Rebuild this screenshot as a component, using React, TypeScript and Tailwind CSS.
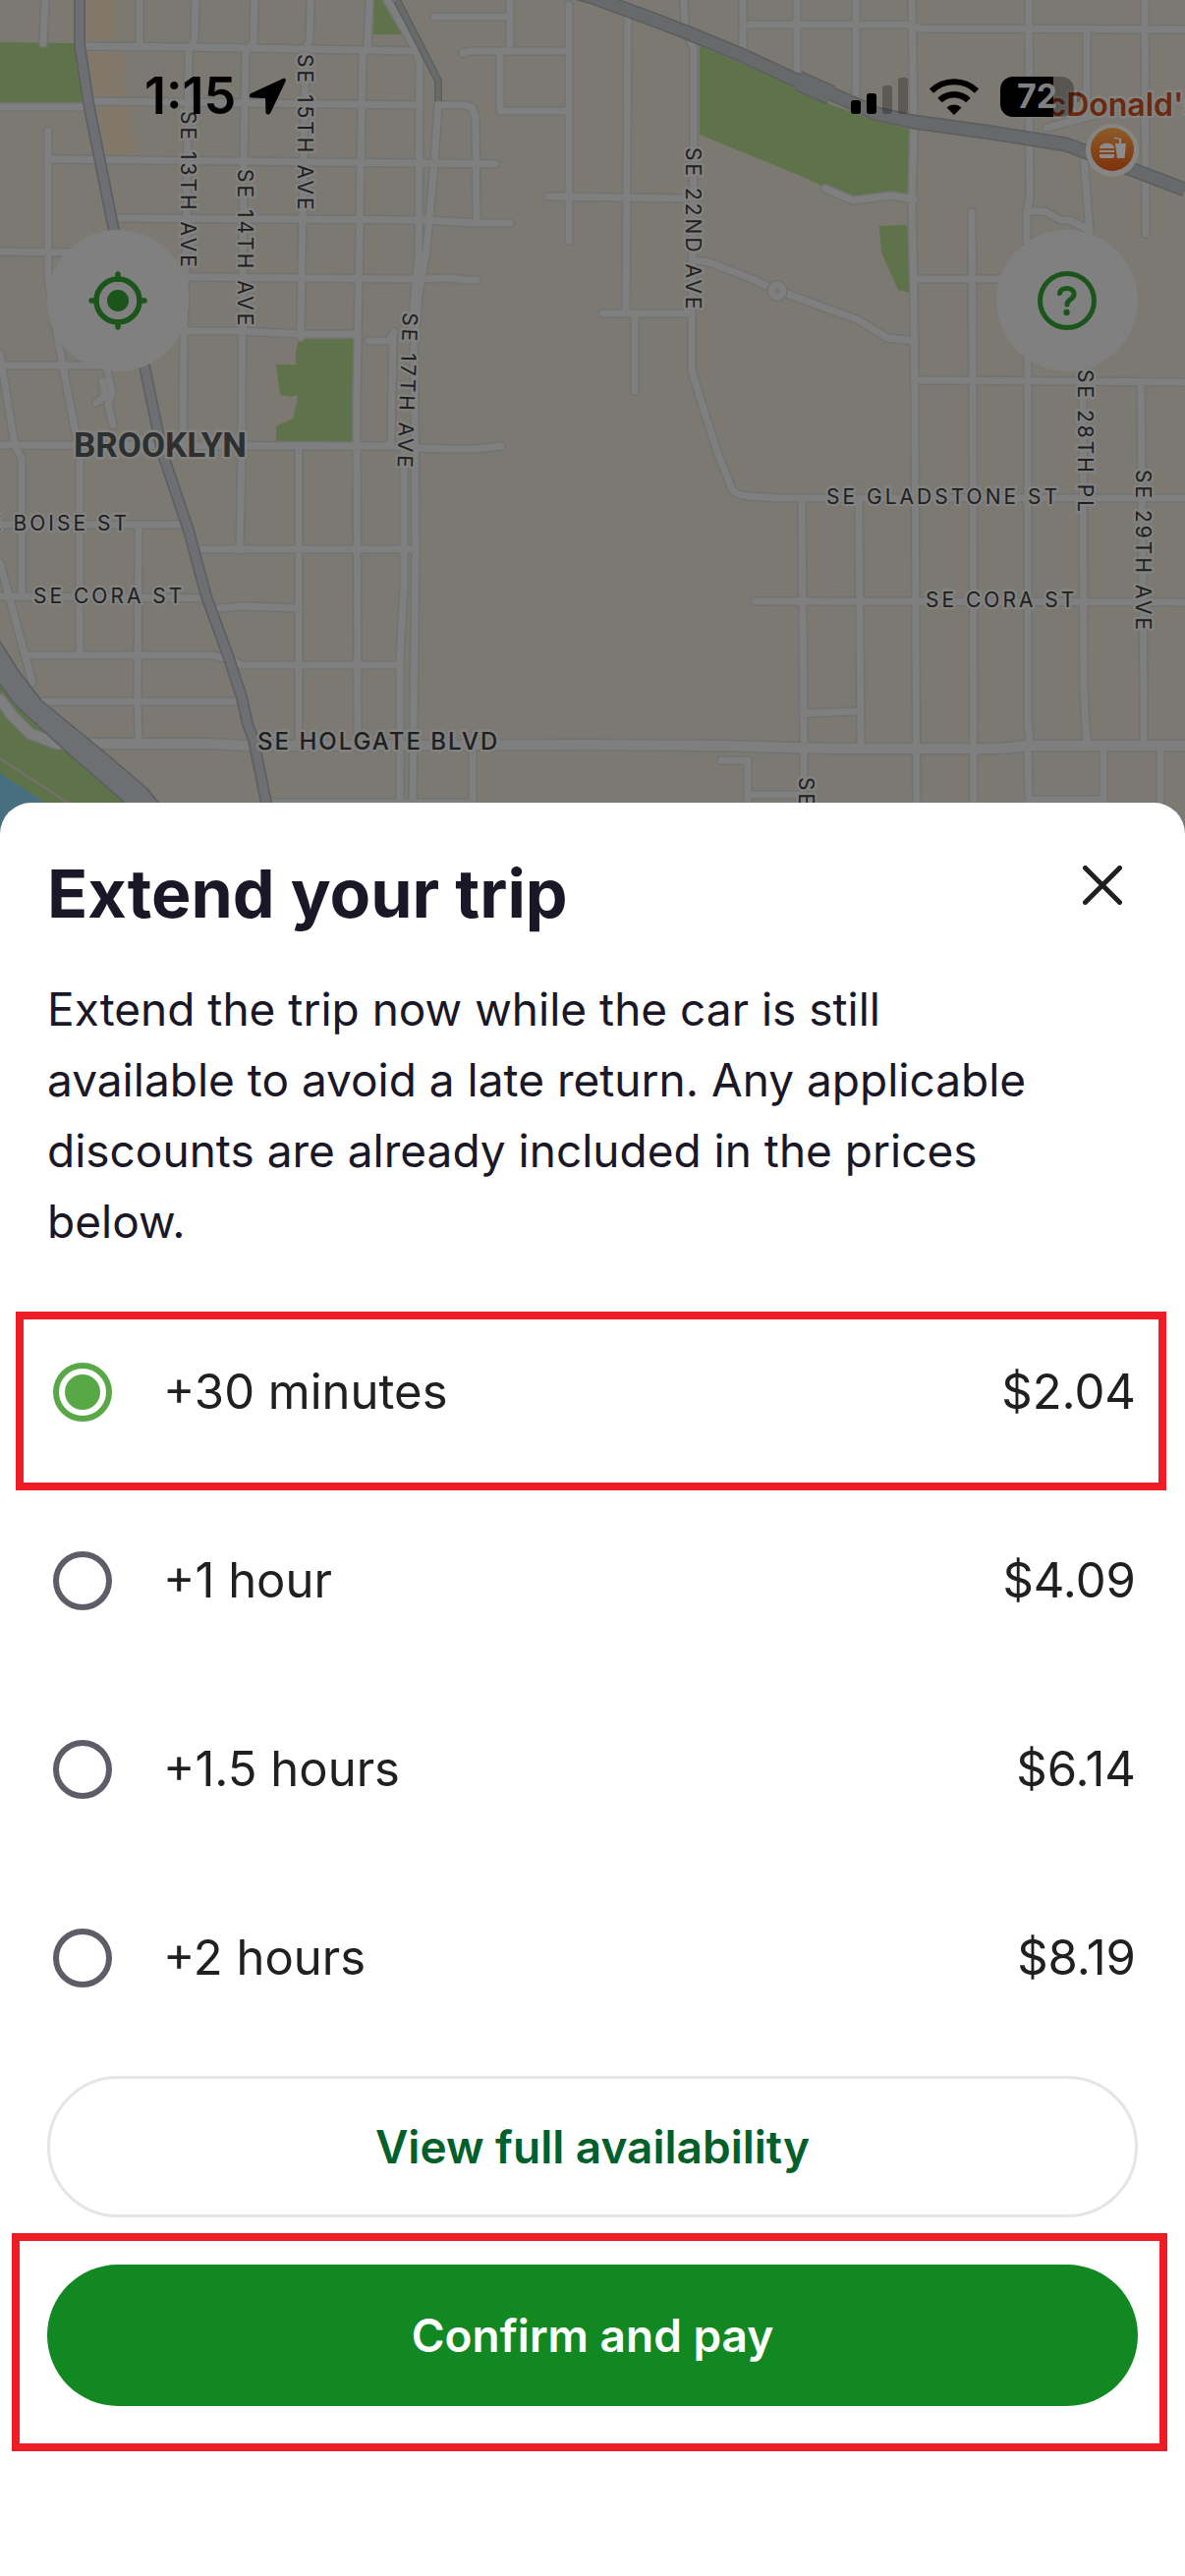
import { useState } from 'react'

interface Option {
  id: string
  label: string
  price: string
}

interface MapLabel {
  text: string
  x: number
  y: number
  rotate?: number
  anchor?: 'start' | 'end'
}

const OPTIONS: Option[] = [
  { id: '30m', label: '+30 minutes', price: '$2.04' },
  { id: '1h', label: '+1 hour', price: '$4.09' },
  { id: '1.5h', label: '+1.5 hours', price: '$6.14' },
  { id: '2h', label: '+2 hours', price: '$8.19' },
]

const STREETS = [
  // north-south, west half
  'M46 0L44 44', 'M142 0V47',
  'M199 0L198 40L192 53L191 130L189 267L187 340L186 453',
  'M259 0L258 43L250 53L248 167L246 410V460L244 560',
  'M316 0L315 40L311 53L308 213L306 343', 'M304 455V755',
  'M376 0L374 47L369 57L366 230L363 410L364 755',
  'M394 0L423 50L427 63L426 260L418 340',
  'M446 107L442 167L434 255L426 300L421 360L422 410L423 560L420 817V865',
  'M375 347H396L401 338', 'M400 342L398 453', 'M411 455V597L407 670V865',
  'M446 107H473L481 110L484 120L485 227',
  'M49 133V283L58 340L71 410L81 460V663',
  'M0 360L8 410L15 453L22 467V607',
  'M109 377L114 400L110 412L115 433', 'M104 388L107 403L98 410',
  'M141 535L140 710L141 753', 'M0 573L33 695', 'M481 763V865',
  // east-west, west half
  'M88 47L192 48L423 52', 'M0 109H83L96 103L427 107', 'M50 162L504 167',
  'M119 222L430 224L485 227H519', 'M0 256L77 257',
  'M192 282L416 284L460 283L471 285H485', 'M186 337H246L308 340H363',
  'M0 372H112', 'M0 453L400 454L427 456L454 457H485L510 454',
  'M0 534H187', 'M202 559H423', 'M0 607L208 609', 'M223 619L246 617L304 619',
  'M27 667H217L231 671', 'M238 673L246 677H404', 'M42 714H240', 'M277 817H481',
  // centre
  'M519 0V52', 'M442 17H519', 'M471 54L479 52H579', 'M509 53V113H579',
  'M579 5V245', 'M558 200L697 202', 'M639 10L637 317', 'M613 319H699',
  'M646 320V398',
  'M696 0L697 27L706 50V140L704 320V377L714 410L730 460L745 498Q747 503 761 505L791 507H1206',
  'M707 265L722 267L768 285L784 293', 'M798 298L872 325L903 344L930 347',
  // north-south, east half
  'M756 0V50', 'M811 0V72', 'M871 0V103',
  'M928 0L930 133L928 207L930 300L931 410L933 865',
  'M1047 0L1048 200L1045 217L1046 410V737L1048 750L1046 760L1048 865',
  'M1106 30V110', 'M1103 160L1109 237', 'M1165 0L1166 238',
  'M989 216L990 410L991 865', 'M1102 388L1103 703L1106 757',
  'M1161 390L1164 710V757', 'M816 508L818 753', 'M818 767V865',
  'M874 510L876 757', 'M761 865V774H734', 'M1123 765V865', 'M1181 765V865',
  // east-west, east half
  'M757 25H922L938 29L1206 30', 'M1065 130L1115 117',
  'M840 192L868 204L907 199L930 203', 'M933 284H1030', 'M933 387L1206 389',
  'M1047 215H1063L1080 224H1088L1109 234', 'M768 612L1206 613',
  'M818 726L876 724', 'M762 809H813', 'M1053 814H1123',
]

const AVENUES = [
  'M0 712L12 728L31 747L58 757H212L254 759L603 758L734 759L849 762H1018L1045 759H1206',
]

const LABELS: MapLabel[] = [
  { text: 'SE 13TH AVE', x: 184, y: 113, rotate: 90 },
  { text: 'SE 14TH AVE', x: 242, y: 172, rotate: 90 },
  { text: 'SE 15TH AVE', x: 303, y: 55, rotate: 90 },
  { text: 'SE 17TH AVE', x: 410, y: 318, rotate: 92 },
  { text: 'SE 22ND AVE', x: 698, y: 150, rotate: 90 },
  { text: 'SE 28TH PL', x: 1097, y: 376, rotate: 90 },
  { text: 'SE 29TH AVE', x: 1156, y: 478, rotate: 90 },
  { text: 'SE 21ST AVE', x: 813, y: 791, rotate: 90 },
  { text: 'SE BOISE ST', x: 132, y: 540, anchor: 'end' },
  { text: 'SE CORA ST', x: 34, y: 614 },
  { text: 'SE GLADSTONE ST', x: 841, y: 513 },
  { text: 'SE CORA ST', x: 942, y: 618 },
]

export default function App() {
  const [selected, setSelected] = useState('30m')

  return (
    <main className="min-h-screen bg-white font-['Inter',sans-serif]">
      <header className="relative overflow-hidden pb-[487px]">
        <StreetMap />
        <StatusBar />
        <div className="relative mt-[109px] flex justify-between px-12">
          <RoundButton label="Center on my location">
            <LocateIcon />
          </RoundButton>
          <RoundButton label="Help">
            <HelpIcon />
          </RoundButton>
        </div>
      </header>

      <section className="relative -mt-12 rounded-t-[32px] bg-white px-12 pt-[50px] pb-[172px]">
        <div className="flex items-start justify-between">
          <h1 className="text-[68px] leading-[84px] font-bold text-[#1a1826]">Extend your trip</h1>
          <button type="button" aria-label="Close" className="flex h-17 w-18 items-center justify-center">
            <svg viewBox="0 0 40 40" className="size-10" fill="none" stroke="#202020" strokeWidth="5" strokeLinecap="round">
              <path d="M2.5 2.5L37.5 37.5M37.5 2.5L2.5 37.5" />
            </svg>
          </button>
        </div>

        <p className="mt-10 max-w-[1020px] text-[46px] leading-[72px] text-[#1a1826]">
          Extend the trip now while the car is still available to avoid a late return. Any applicable
          discounts are already included in the prices below.
        </p>

        <fieldset className="mt-[42px]">
          <legend className="sr-only">Extension length</legend>
          {OPTIONS.map(option => (
            <OptionRow
              key={option.id}
              option={option}
              checked={selected === option.id}
              highlighted={option.id === '30m'}
              onSelect={() => setSelected(option.id)}
            />
          ))}
        </fieldset>

        <button
          type="button"
          className="mt-6 h-36 w-full rounded-full border-3 border-[#e5e5e5] text-[46px] font-semibold text-[#03602b]"
        >
          View full availability
        </button>
        <div className="relative mt-12">
          <button type="button" className="h-36 w-full rounded-full bg-[#128822] text-[46px] font-semibold text-white">
            Confirm and pay
          </button>
          <div className="pointer-events-none absolute -top-8 -right-[30px] -bottom-[46px] -left-9 border-8 border-[#ee1c24]" />
        </div>
      </section>
    </main>
  )
}

function OptionRow({
  option, checked, highlighted, onSelect,
}: {
  option: Option; checked: boolean; highlighted: boolean; onSelect: () => void
}) {
  return (
    <label className="relative flex h-48 items-center text-[49px] text-[#202020]">
      <input
        type="radio"
        name="extension"
        value={option.id}
        checked={checked}
        onChange={onSelect}
        className="mx-1.5 size-15 shrink-0 appearance-none rounded-full border-6 border-[#5d5d67] bg-clip-content p-1.5 checked:border-[#58a846] checked:bg-[#58a846]"
      />
      <span className="ml-[46px] flex-1">{option.label}</span>
      <span className="mr-0.5">{option.price}</span>
      {highlighted && (
        <span className="pointer-events-none absolute top-[14px] -right-[29px] -bottom-1 -left-8 border-8 border-[#ee1c24]" />
      )}
    </label>
  )
}

function RoundButton({ label, children }: { label: string; children: React.ReactNode }) {
  return (
    <button
      type="button"
      aria-label={label}
      className="flex size-36 items-center justify-center rounded-full bg-[#808080]"
    >
      {children}
    </button>
  )
}

function LocateIcon() {
  return (
    <svg viewBox="0 0 60 60" className="size-15" fill="none" stroke="#1b551b" strokeWidth="5.5" strokeLinecap="round">
      <circle cx="30" cy="30" r="22" />
      <circle cx="30" cy="30" r="11" fill="#1b551b" stroke="none" />
      <path d="M30 3V8M30 52V57M3 30H8M52 30H57" />
    </svg>
  )
}

function HelpIcon() {
  return (
    <svg viewBox="0 0 60 60" className="size-15" fill="none" stroke="#1b551b" strokeWidth="5" strokeLinecap="round">
      <circle cx="30" cy="30" r="27.5" />
      <path d="M22.5 22.5C23.5 15.5 37.5 15.5 37 24C36.5 29 30 28.5 30 34" />
      <circle cx="29.5" cy="42" r="3.2" fill="#1b551b" stroke="none" />
    </svg>
  )
}

function StatusBar() {
  return (
    <div className="relative flex h-[125px] items-center justify-between pt-[71px] pr-[106px] pl-[147px] text-black">
      <div className="flex items-center gap-3">
        <span className="text-[52px] leading-[54px] font-semibold">1:15</span>
        <svg viewBox="0 0 40 40" className="size-10" aria-label="Location in use">
          <path
            d="M36 2L3.5 17C1 18.5 1.5 21.5 4 21.5L18 22L18.5 36C18.5 39 22 39.5 23.5 36.5L38.5 5C39.5 2.5 38 1 36 2Z"
            fill="currentColor"
          />
        </svg>
      </div>
      <div className="flex items-center gap-[22px]">
        <svg viewBox="0 0 58 38" className="h-[38px] w-[58px]" aria-label="Signal">
          <rect x="0" y="23" width="10" height="14" rx="3" />
          <rect x="16" y="16" width="10" height="21" rx="3" />
          <rect x="32" y="8" width="10" height="29" rx="3" fillOpacity="0.25" />
          <rect x="48" y="0" width="10" height="37" rx="3" fillOpacity="0.25" />
        </svg>
        <svg viewBox="0 0 50 37" className="h-[37px] w-[50px]" fill="none" stroke="currentColor" aria-label="Wi-Fi">
          <path d="M2 12.5A33 33 0 0 1 48 12.5" strokeWidth="6" />
          <path d="M10.5 22A21 21 0 0 1 39.5 22" strokeWidth="6.5" />
          <path d="M25 37L17.5 29.5A11 11 0 0 1 32.5 29.5Z" fill="currentColor" stroke="none" />
        </svg>
        <div className="flex items-center gap-[3px]">
          <div className="flex h-[41px] w-[75px] items-center justify-center rounded-[13px] bg-linear-to-r from-black from-72% to-black/30 to-72% text-[34px] leading-none font-bold text-[#808080]">
            72
          </div>
          <div className="h-3 w-1 rounded-r-full bg-black/20" />
        </div>
      </div>
    </div>
  )
}

function StreetMap() {
  return (
    <svg
      viewBox="0 0 1206 865"
      preserveAspectRatio="xMidYMin slice"
      className="absolute inset-0 size-full"
      fill="none"
      strokeLinejoin="round"
    >
      <defs>
        <linearGradient id="poi" x1="0" y1="0" x2="0" y2="1">
          <stop offset="0" stopColor="#8c5c29" />
          <stop offset="1" stopColor="#7f310b" />
        </linearGradient>
      </defs>
      <rect width="1206" height="865" fill="#7b7972" />

      {/* Parks, sand and water */}
      <g fill="#5f734a">
        <path d="M0 43L77 44L86 104L0 105Z" />
        <path d="M381 0H392L410 35H380Z" />
        <path d="M304 345H360V449H281V434L298 426L302 410L303 402L296 404L285 402L281 371H301V357Z" />
        <path d="M712 47L811 88L841 105L895 124L925 131L924 197L907 194L870 200L834 188L815 179L712 137Z" />
        <path d="M895 230L923 229L926 298L914 295L897 257Z" />
        <path d="M0 697L15 717L127 817L170 865H0Z" />
      </g>
      <path d="M88 0H118L119 40L88 41ZM89 53H127L126 83L140 157H108Z" fill="#82786a" />
      <path d="M0 787L46 817L110 865H0Z" fill="#486f7f" />
      <path d="M0 772L69 817L140 865" stroke="#77706f" strokeWidth="2" />

      {/* Streets: casing first, then fill */}
      <g stroke="#717371" strokeLinecap="round">
        {STREETS.map(d => <path key={d} d={d} strokeWidth="10" />)}
        {AVENUES.map(d => <path key={d} d={d} strokeWidth="13" />)}
      </g>
      <g stroke="#7f7f80" strokeLinecap="round">
        {STREETS.map(d => <path key={d} d={d} strokeWidth="7" />)}
        {AVENUES.map(d => <path key={d} d={d} strokeWidth="10" />)}
      </g>
      <circle cx="791" cy="296" r="6" stroke="#717371" strokeWidth="10" />
      <circle cx="791" cy="296" r="6" stroke="#7f7f80" strokeWidth="7" />

      {/* Highways */}
      <path d="M404 0L446 82V103" stroke="#5c605f" strokeWidth="8" />
      <path d="M404 0L446 82V103" stroke="#686b6a" strokeWidth="5" />
      <g stroke="#5b5d60">
        <path d="M81 0V45L90 105L115 230L148 377L165 460L192 540L210 607L233 670L246 710L252 737L258 753L271 817L278 865" strokeWidth="12" />
        <path d="M560 -15L603 -3L668 21L699 33L757 57L809 81L845 95L893 116L930 124L1009 135L1085 147L1206 193" strokeWidth="15" />
        <path d="M812 82L846 97" strokeWidth="21" />
      </g>
      <g stroke="#68696b">
        <path d="M81 0V45L90 105L115 230L148 377L165 460L192 540L210 607L233 670L246 710L252 737L258 753L271 817L278 865" strokeWidth="9" stroke="#6d6f72" />
        <path d="M560 -15L603 -3L668 21L699 33L757 57L809 81L845 95L893 116L930 124L1009 135L1085 147L1206 193" strokeWidth="12" />
        <path d="M812 82L846 97" strokeWidth="18" />
      </g>
      <path
        d="M-5 645L19 683L42 713L108 767L150 803L200 865H170L127 817L73 770L15 717L-5 690Z"
        fill="#6d6f72"
        stroke="#5b5d60"
        strokeWidth="1.5"
      />

      {/* Place names */}
      <g stroke="#828281" strokeWidth="5" fill="#1f1f1f" className="[paint-order:stroke]">
        {LABELS.map(l => (
          <text
            key={`${l.text}-${l.x}`}
            transform={`translate(${l.x} ${l.y}) rotate(${l.rotate ?? 0})`}
            textAnchor={l.anchor ?? 'start'}
            className="text-[21px] tracking-[3px]"
          >
            {l.text}
          </text>
        ))}
        <text x="262" y="763" className="text-[24px] font-medium tracking-[2px]">SE HOLGATE BLVD</text>
        <text x="75" y="465" fill="#2d302f" className="font-[Roboto,sans-serif] text-[35px] font-bold">
          BROOKLYN
        </text>
        <text x="1037" y="118" fill="#692a10" className="text-[32px] font-semibold">McDonald's</text>
      </g>
      <circle cx="1132" cy="153" r="27" fill="#858584" />
      <circle cx="1132" cy="152" r="22" fill="url(#poi)" />
      <g fill="#8b8b8b">
        <path d="M1119 151C1119 144 1134 144 1134 151ZM1119 153H1134V155H1119ZM1119 157H1134V159Q1134 161 1131 161H1122Q1119 161 1119 159Z" />
        <path d="M1135 146H1139V142L1134 141V139.5L1141 141V146H1146L1144.5 161H1137Z" />
      </g>
    </svg>
  )
}
